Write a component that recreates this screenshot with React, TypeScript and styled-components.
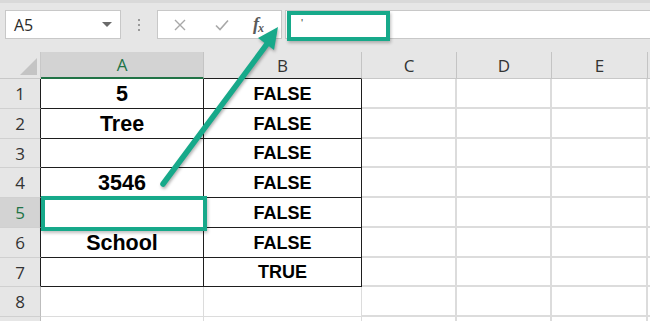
import React from "react";
import styled, { createGlobalStyle } from "styled-components";

const GlobalStyle = createGlobalStyle`
  html, body { margin: 0; padding: 0; background: #ffffff; }
  body { font-family: "Liberation Sans", Arial, sans-serif; overflow: hidden; }
  * { box-sizing: border-box; }
`;

const TEAL = "#17a98a";
const GRID = "#dcdcdc";
const DARK = "#1e1e1e";
const HEADER_GREEN = "#217346";

const Page = styled.div`
  position: relative;
  width: 650px;
  height: 321px;
  overflow: hidden;
  background: #ffffff;
`;

const Toolbar = styled.div`
  height: 52px;
  background: #e6e6e6;
  border-top: 3px solid #d9d9d9;
  padding: 7px 0 0 5px;
  display: flex;
  align-items: flex-start;
`;

const NameBox = styled.div`
  width: 116px;
  height: 29px;
  background: #ffffff;
  border: 1px solid #c8c8c8;
  display: flex;
  align-items: center;
  justify-content: space-between;
  padding: 0 8px 0 8px;
`;

const NameText = styled.span`
  font-family: "Open Sans", "Noto Sans", sans-serif;
  font-size: 16px;
  color: #2b2b2b;
`;

const DropArrow = styled.span`
  width: 0;
  height: 0;
  border-left: 5px solid transparent;
  border-right: 5px solid transparent;
  border-top: 5px solid #6a6a6a;
`;

const Dots = styled.div`
  width: 36px;
  height: 29px;
  display: flex;
  flex-direction: column;
  align-items: center;
  justify-content: center;
  gap: 3px;
`;

const Dot = styled.span`
  width: 2px;
  height: 2px;
  background: #9a9a9a;
`;

const ButtonsBox = styled.div`
  width: 125px;
  height: 29px;
  background: #ffffff;
  border: 1px solid #c8c8c8;
  display: flex;
  align-items: center;
  padding-left: 16px;
`;

const IconSlot = styled.span<{ $w: number }>`
  width: ${(p) => p.$w}px;
  display: flex;
  align-items: center;
  justify-content: flex-start;
`;

const FxLabel = styled.span`
  font-family: "Liberation Serif", "Times New Roman", serif;
  font-style: italic;
  font-weight: bold;
  font-size: 18px;
  color: #5a5a5a;
  letter-spacing: -1px;
  line-height: 1;
  & sub {
    font-size: 12px;
    vertical-align: -2px;
  }
`;

const FormulaInput = styled.div`
  flex: 1;
  height: 29px;
  margin-left: 3px;
  background: #ffffff;
  border: 1px solid #c8c8c8;
  border-right: none;
  padding: 6px 0 0 15px;
  font-family: "Liberation Sans", Arial, sans-serif;
  font-size: 11px;
  color: #444;
`;

const Sheet = styled.div`
  display: grid;
  grid-template-columns: 41px 163px 158px 95px 95px 96px 40px;
  grid-template-rows: 27px 30px 30px 29px 30px 30px 30px 29px 30px 30px;
`;

const Corner = styled.div`
  position: relative;
  background: #e6e6e6;
  border-right: 1px solid #c8c8c8;
  border-bottom: 1px solid #c8c8c8;
  &::after {
    content: "";
    position: absolute;
    right: 3px;
    bottom: 3px;
    width: 0;
    height: 0;
    border-left: 17px solid transparent;
    border-bottom: 17px solid #c4c4c4;
  }
`;

const ColHeader = styled.div<{ $active?: boolean; $bottom: string; $bw: number }>`
  background: ${(p) => (p.$active ? "#d3d3d3" : "#e6e6e6")};
  border-right: 1px solid #c4c4c4;
  border-bottom: ${(p) => p.$bw}px solid ${(p) => p.$bottom};
  display: flex;
  align-items: center;
  justify-content: center;
  font-family: "Open Sans", "Noto Sans", sans-serif;
  font-size: 17px;
  color: ${(p) => (p.$active ? HEADER_GREEN : "#333")};
`;

const RowHeader = styled.div<{ $active?: boolean; $right: string }>`
  background: ${(p) => (p.$active ? "#d3d3d3" : "#e6e6e6")};
  border-right: 1px solid ${(p) => p.$right};
  border-bottom: 1px solid #d0d0d0;
  display: flex;
  align-items: center;
  justify-content: center;
  font-family: "Open Sans", "Noto Sans", sans-serif;
  font-size: 17px;
  color: ${(p) => (p.$active ? HEADER_GREEN : "#333")};
`;

const Cell = styled.div<{ $boxed?: boolean; $size: number; $gridW: number }>`
  background: #ffffff;
  border-right: ${(p) => (p.$boxed ? `1px solid ${DARK}` : `${p.$gridW}px solid ${GRID}`)};
  border-bottom: ${(p) => (p.$boxed ? `1px solid ${DARK}` : `${p.$gridW}px solid ${GRID}`)};
  display: flex;
  align-items: center;
  justify-content: center;
  padding-top: 1px;
  font-family: "Liberation Sans", Arial, sans-serif;
  font-weight: bold;
  font-size: ${(p) => p.$size}px;
  color: #000;
`;

const Highlight = styled.div<{ $x: number; $y: number; $w: number; $h: number }>`
  position: absolute;
  left: ${(p) => p.$x}px;
  top: ${(p) => p.$y}px;
  width: ${(p) => p.$w}px;
  height: ${(p) => p.$h}px;
  border: 4px solid ${TEAL};
  box-shadow: 1px 2px 3px rgba(0, 0, 0, 0.25);
  pointer-events: none;
`;

const ArrowSvg = styled.svg`
  position: absolute;
  left: 0;
  top: 0;
  width: 650px;
  height: 321px;
  pointer-events: none;
  filter: drop-shadow(1px 2px 1.5px rgba(0, 0, 0, 0.3));
`;

const cols = ["A", "B", "C", "D", "E", ""];
const colA = ["5", "Tree", "", "3546", "", "School", ""];
const colB = ["FALSE", "FALSE", "FALSE", "FALSE", "FALSE", "FALSE", "TRUE"];

export default function App() {
  const rows = [1, 2, 3, 4, 5, 6, 7, 8, 9];
  return (
    <Page>
      <GlobalStyle />
      <Toolbar>
        <NameBox>
          <NameText>A5</NameText>
          <DropArrow />
        </NameBox>
        <Dots>
          <Dot />
          <Dot />
          <Dot />
        </Dots>
        <ButtonsBox>
          <IconSlot $w={41}>
            <svg width="12" height="12" viewBox="0 0 12 12">
              <path d="M1 1 L11 11 M11 1 L1 11" stroke="#a8a8a8" strokeWidth="1.4" fill="none" />
            </svg>
          </IconSlot>
          <IconSlot $w={38}>
            <svg width="14" height="12" viewBox="0 0 14 12">
              <path d="M1 6.5 L5 10.5 L13 1.5" stroke="#a8a8a8" strokeWidth="1.6" fill="none" />
            </svg>
          </IconSlot>
          <IconSlot $w={26}>
            <FxLabel>
              f<sub>x</sub>
            </FxLabel>
          </IconSlot>
        </ButtonsBox>
        <FormulaInput>'</FormulaInput>
      </Toolbar>
      <Sheet>
        <Corner />
        {cols.map((c, i) => (
          <ColHeader
            key={i}
            $active={i === 0}
            $bottom={i === 0 ? HEADER_GREEN : i === 1 ? DARK : "#c8c8c8"}
            $bw={i === 0 ? 2 : 1}
          >
            {c}
          </ColHeader>
        ))}
        {rows.map((r) => {
          const inData = r <= 7;
          return (
            <React.Fragment key={r}>
              <RowHeader $active={r === 5} $right={inData ? DARK : "#bdbdbd"}>
                {r <= 8 ? r : ""}
              </RowHeader>
              <Cell $boxed={inData} $size={21.5} $gridW={1}>
                {inData ? colA[r - 1] : ""}
              </Cell>
              <Cell $boxed={inData} $size={18} $gridW={1}>
                {inData ? colB[r - 1] : ""}
              </Cell>
              {[0, 1, 2, 3].map((k) => (
                <Cell key={k} $size={16} $gridW={2} />
              ))}
            </React.Fragment>
          );
        })}
      </Sheet>
      <Highlight $x={287} $y={11} $w={103} $h={30} />
      <Highlight $x={41} $y={196} $w={166} $h={35} />
      <ArrowSvg viewBox="0 0 650 321">
        <line x1="163" y1="184" x2="267" y2="44" stroke={TEAL} strokeWidth="5.5" strokeLinecap="round" />
        <polygon points="278,27 274,50 258,38" fill={TEAL} />
      </ArrowSvg>
    </Page>
  );
}
